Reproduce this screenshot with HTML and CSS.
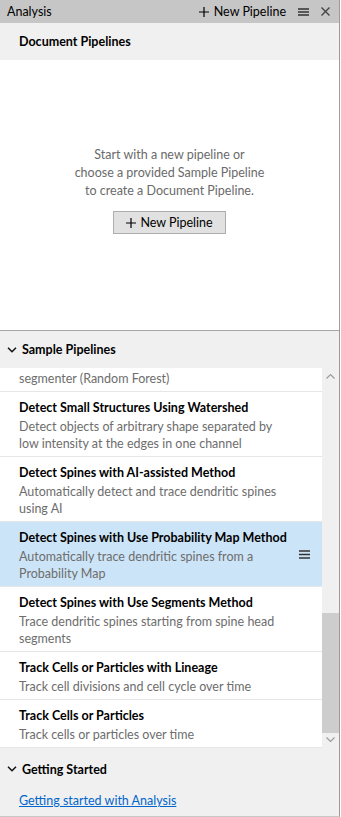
FILE: index.html
```html
<!DOCTYPE html>
<html lang="en">

<head>
    <meta charset="UTF-8">
    <meta name="viewport" content="width=device-width, initial-scale=1.0">
    <title>Analysis</title>
    <link rel="stylesheet" href="styles.css">
</head>

<body>

    <div class="panel">
        <div class="titlebar">
            <span class="title">Analysis</span>
            <span class="title-action">
                <svg width="10" height="10" viewBox="0 0 10 10"><path d="M5 0v10M0 5h10" stroke="#000" stroke-width="1.2"/></svg>
                New Pipeline
            </span>
            <svg class="icon-menu" width="11" height="8" viewBox="0 0 11 8"><path d="M0 1h11M0 4h11M0 7h11" stroke="#333" stroke-width="1.6"/></svg>
            <svg class="icon-close" width="9" height="9" viewBox="0 0 9 9"><path d="M0.5 0.5l8 8M8.5 0.5l-8 8" stroke="#444" stroke-width="1.4"/></svg>
        </div>

        <div class="section-head plain">Document Pipelines</div>
        <div class="doc-body">
            <p class="hint">Start with a new pipeline or<br>choose a provided Sample Pipeline<br>to create a Document Pipeline.</p>
            <button class="btn">
                <svg width="10" height="10" viewBox="0 0 10 10"><path d="M5 0v10M0 5h10" stroke="#000" stroke-width="1.2"/></svg>
                New Pipeline
            </button>
        </div>

        <div class="section-head">
            <svg class="chev" width="10" height="6" viewBox="0 0 10 6"><path d="M1 0.8l4 4 4-4" fill="none" stroke="#111" stroke-width="1.5"/></svg>
            Sample Pipelines
        </div>

        <div class="list-wrap">
            <div class="list">
                <div class="items">
                    <div class="item">
                        <div class="item-title">Segment with Pixel Classifier</div>
                        <div class="item-desc">Segment images with a trained pixel<br>segmenter (Random Forest)</div>
                    </div>
                    <div class="item">
                        <div class="item-title">Detect Small Structures Using Watershed</div>
                        <div class="item-desc">Detect objects of arbitrary shape separated by low intensity at the edges in one channel</div>
                    </div>
                    <div class="item">
                        <div class="item-title">Detect Spines with AI-assisted Method</div>
                        <div class="item-desc">Automatically detect and trace dendritic spines using AI</div>
                    </div>
                    <div class="item selected">
                        <div class="item-title">Detect Spines with Use Probability Map Method</div>
                        <div class="item-desc">Automatically trace dendritic spines from a Probability Map</div>
                        <svg class="item-menu" width="11" height="9" viewBox="0 0 11 9"><path d="M0 1h11M0 4.5h11M0 8h11" stroke="#333" stroke-width="1.6"/></svg>
                    </div>
                    <div class="item">
                        <div class="item-title">Detect Spines with Use Segments Method</div>
                        <div class="item-desc">Trace dendritic spines starting from spine head segments</div>
                    </div>
                    <div class="item">
                        <div class="item-title">Track Cells or Particles with Lineage</div>
                        <div class="item-desc">Track cell divisions and cell cycle over time</div>
                    </div>
                    <div class="item">
                        <div class="item-title">Track Cells or Particles</div>
                        <div class="item-desc">Track cells or particles over time</div>
                    </div>
                </div>
            </div>
            <div class="scrollbar">
                <div class="arrow">
                    <svg width="9" height="5" viewBox="0 0 9 5"><path d="M0.5 4.5l4-4 4 4" fill="none" stroke="#9a9a9a" stroke-width="1.1"/></svg>
                </div>
                <div class="track"><div class="thumb"></div></div>
                <div class="arrow">
                    <svg width="9" height="5" viewBox="0 0 9 5"><path d="M0.5 0.5l4 4 4-4" fill="none" stroke="#9a9a9a" stroke-width="1.1"/></svg>
                </div>
            </div>
        </div>

        <div class="section-head tall">
            <svg class="chev" width="10" height="6" viewBox="0 0 10 6"><path d="M1 0.8l4 4 4-4" fill="none" stroke="#111" stroke-width="1.5"/></svg>
            Getting Started
        </div>
        <div class="links">
            <a href="#" class="link">Getting started with Analysis</a>
        </div>
    </div>

</body>

</html>
```

FILE: styles.css
```css
body {
    margin: 0;
    background: #fff;
    font-family: Lato, "Noto Sans", sans-serif;
    font-size: 12.5px;
    color: #000;
}

.panel {
    width: 339px;
    height: 816px;
    border-right: 1px solid #9c9c9c;
    border-bottom: 1px solid #c8c8c8;
    background: #f0f0f0;
    display: flex;
    flex-direction: column;
}

.titlebar {
    height: 23px;
    background: #c6c6c6;
    display: flex;
    align-items: center;
    padding: 0 9px 0 7px;
    flex-shrink: 0;
}

.title {
    flex: 1;
}

.title-action {
    display: flex;
    align-items: center;
    gap: 5px;
}

.icon-menu {
    margin-left: 12px;
}

.icon-close {
    margin-left: 12px;
}

.section-head {
    height: 37px;
    display: flex;
    align-items: center;
    gap: 5px;
    padding-left: 7px;
    font-weight: bold;
    flex-shrink: 0;
}

.section-head.plain {
    padding-left: 19px;
}

.section-head.tall {
    height: 42px;
}

.doc-body {
    background: #fff;
    height: 270px;
    border-bottom: 1px solid #a6a6a6;
    display: flex;
    flex-direction: column;
    align-items: center;
    flex-shrink: 0;
}

.hint {
    margin: 86px 0 0;
    text-align: center;
    line-height: 18px;
    color: #6a6a6a;
}

.btn {
    margin-top: 11px;
    width: 113px;
    height: 23px;
    background: #e1e1e1;
    border: 1px solid #adadad;
    font: inherit;
    color: #000;
    display: flex;
    align-items: center;
    justify-content: center;
    gap: 4px;
    padding: 0;
}

.list-wrap {
    height: 380px;
    display: flex;
    flex-shrink: 0;
}

.list {
    flex: 1;
    background: #fff;
    overflow: hidden;
}

.items {
    margin-top: -41px;
}

.item {
    position: relative;
    padding: 7px 40px 4px 19px;
    border-bottom: 1px solid #e6e6e6;
}

.item.selected {
    background: #cce4f7;
}

.item-title {
    font-weight: bold;
    line-height: 18px;
    margin-bottom: 1px;
    white-space: nowrap;
}

.item-desc {
    line-height: 17px;
    color: #6d6d6d;
}

.item-menu {
    position: absolute;
    right: 12px;
    top: 28px;
}

.scrollbar {
    width: 17px;
    display: flex;
    flex-direction: column;
    background: #f0f0f0;
}

.arrow {
    height: 17px;
    display: flex;
    align-items: center;
    justify-content: center;
}

.track {
    flex: 1;
    display: flex;
    flex-direction: column;
    justify-content: flex-end;
}

.thumb {
    height: 120px;
    margin-bottom: -2px;
    background: #cdcdcd;
}

.links {
    padding: 2px 19px 0;
}

.link {
    color: #0066cc;
    line-height: 18px;
}
```
